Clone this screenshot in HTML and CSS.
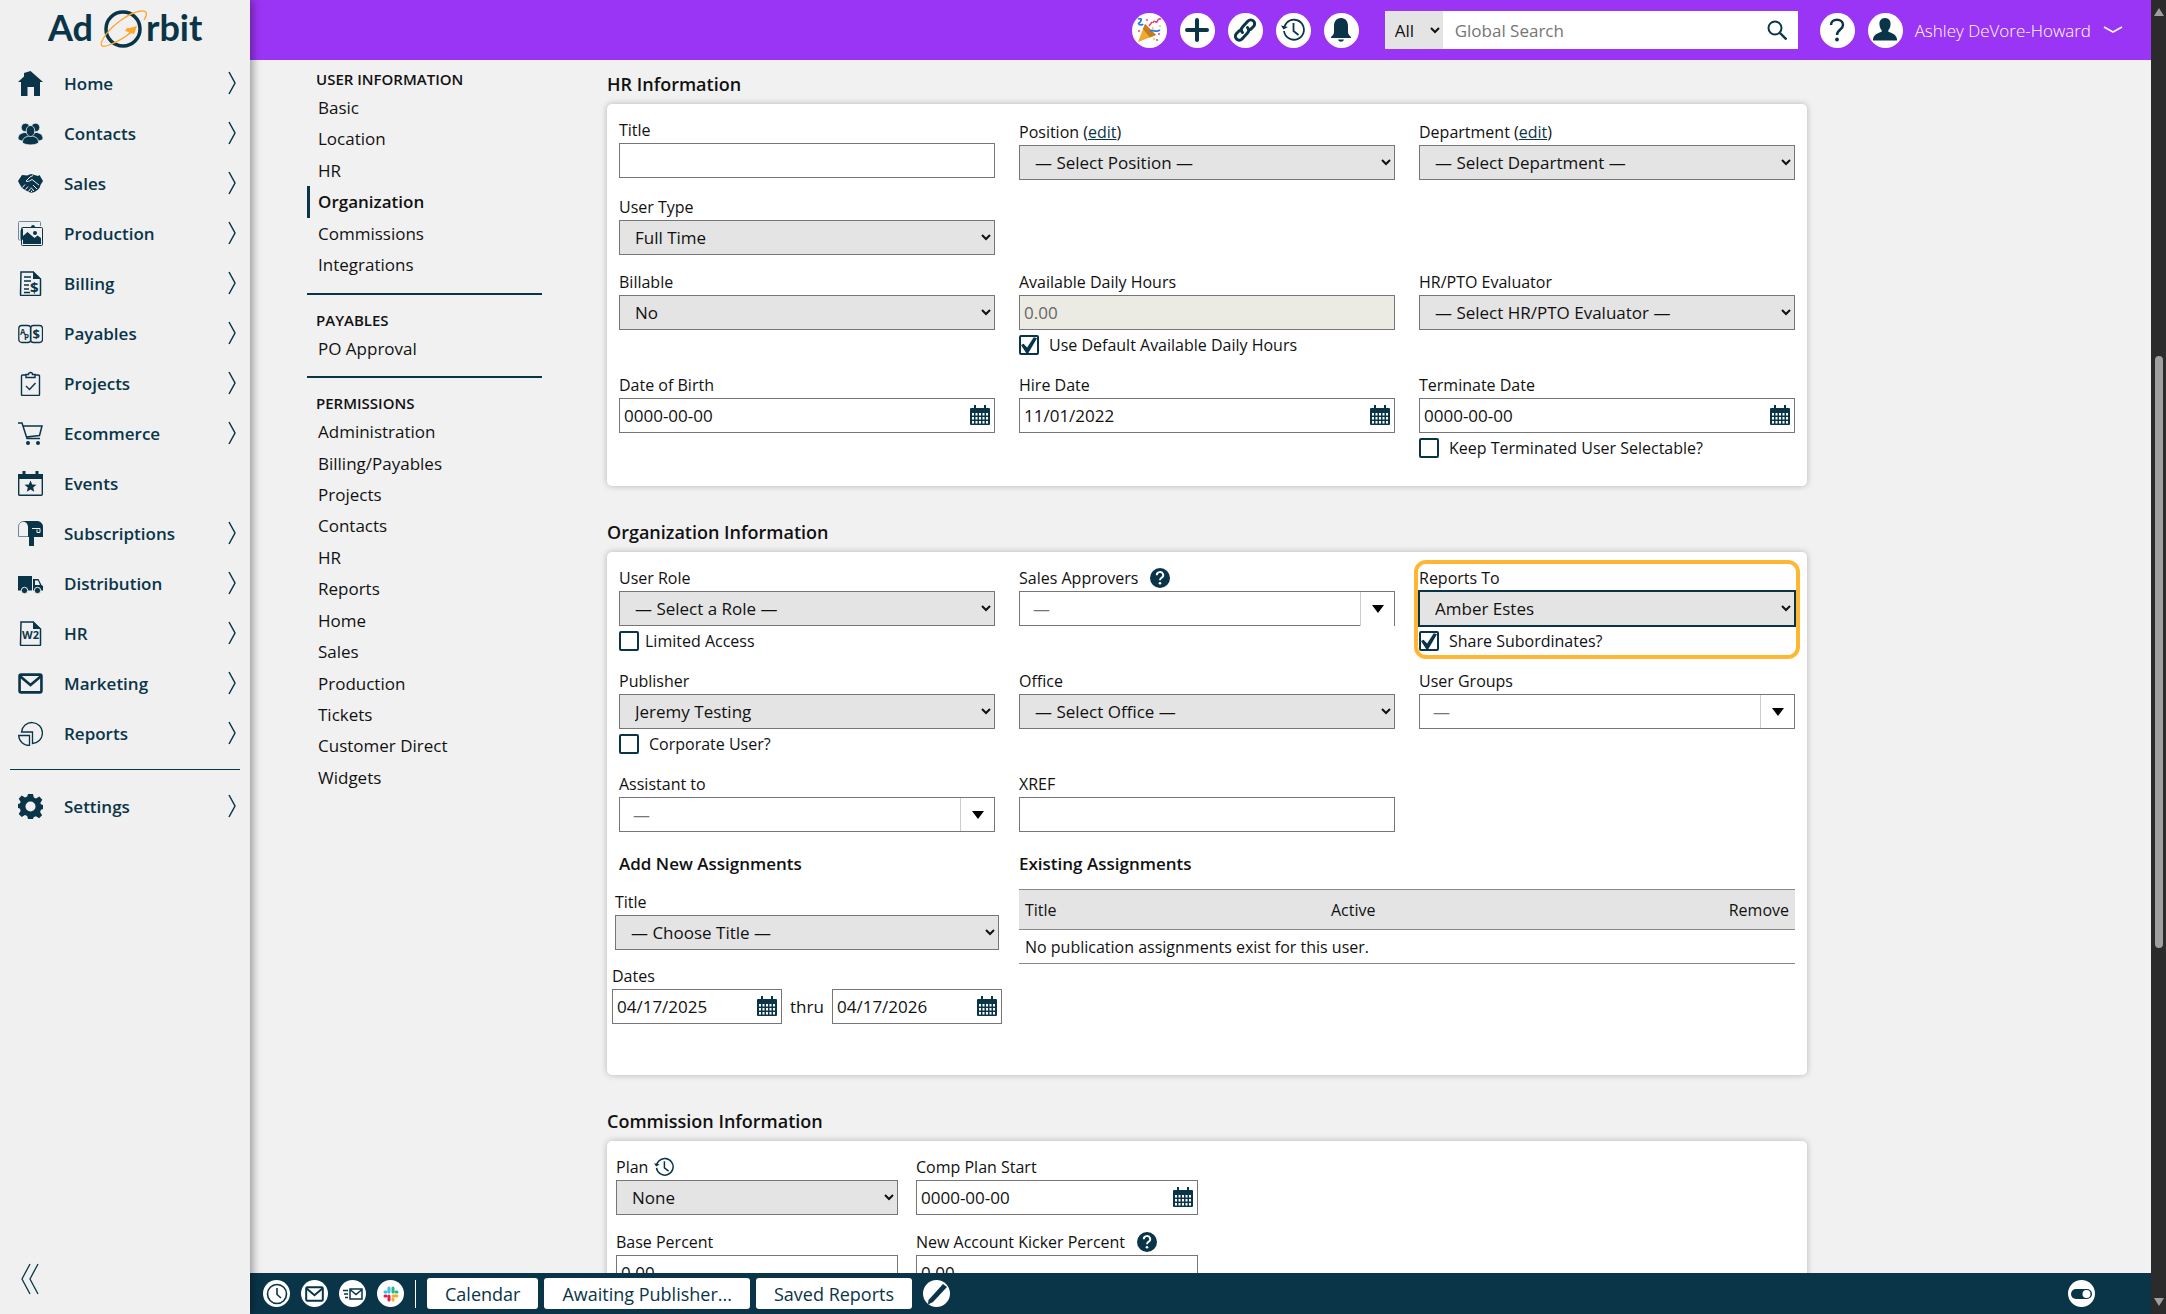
FILE: index.html
```html
<!DOCTYPE html>
<html lang="en">
<head>
    <meta charset="utf-8">
    <title>Ad Orbit - User Information</title>
    <link rel="stylesheet" href="styles.css">
</head>
<body>
    <!-- shared icons -->
    <svg class="sprite" aria-hidden="true">
        <symbol id="chevron" viewBox="0 0 8 24"><path d="M1 1l6 11-6 11" fill="none" stroke="currentColor" stroke-width="1.5"/></symbol>
        <symbol id="calendar" viewBox="0 0 20 20">
            <path d="M1 3h3V0h2v3h8V0h2v3h3a1 1 0 0 1 1 1v15a1 1 0 0 1-1 1H1a1 1 0 0 1-1-1V4a1 1 0 0 1 1-1z" fill="currentColor"/>
            <path d="M2 8h2v2.500H2zm3.500 0h2v2.500h-2zm3.500 0h2v2.500H9zm3.500 0h2v2.500h-2zm3.500 0h2v2.500h-2zM2 12h2v2.500H2zm3.500 0h2v2.500h-2zm3.500 0h2v2.500H9zm3.500 0h2v2.500h-2zm3.500 0h2v2.500h-2zM2 16h2v2.500H2zm3.500 0h2v2.500h-2zm3.500 0h2v2.500H9zm3.500 0h2v2.500h-2zm3.500 0h2v2.500h-2z" fill="#fff"/>
        </symbol>
        <symbol id="history" viewBox="0 0 24 24">
            <path d="M3 13a10 10 0 1 0 2.500-8L3 9" fill="none" stroke="currentColor" stroke-width="1.800"/>
            <path d="M0 7.500l2.500 4L7 9" fill="currentColor"/>
            <path d="M12.500 5v8l5 4" fill="none" stroke="currentColor" stroke-width="1.800"/>
        </symbol>
        <symbol id="help" viewBox="0 0 20 20">
            <circle cx="10" cy="10" r="10" fill="currentColor"/>
            <path d="M6.800 7.300a3.200 3 0 1 1 4.600 2.500c-1 .6-1.400 1.100-1.400 2.500" fill="none" stroke="#fff" stroke-width="1.900"/>
            <circle cx="10" cy="15.200" r="1.300" fill="#fff"/>
        </symbol>
        <symbol id="mail" viewBox="0 0 24 20">
            <rect x="1.500" y="1.500" width="21" height="17" rx="1.500" fill="none" stroke="currentColor" stroke-width="2.500"/>
            <path d="M2 3l10 8.500L22 3" fill="none" stroke="currentColor" stroke-width="2.500"/>
        </symbol>
        <symbol id="down" viewBox="0 0 12 8"><path d="M0 0h12L6 8z" fill="currentColor"/></symbol>
    </svg>

    <aside class="sidebar">
        <a class="logo" href="#" aria-label="Ad Orbit">
            <svg width="160" height="58" viewBox="0 0 160 58">
                <text class="logo-text" x="0" y="41">Ad</text>
                <text class="logo-text" x="98" y="41">rbit</text>
                <circle cx="75" cy="29" r="17" fill="none" stroke="#0a3549" stroke-width="3.500"/>
                <path d="M96 20c4-6 3-10-3-9-11 1-31 15-38 28-4 7-1 9 6 6 8-3 17-8 23-14" fill="none" stroke="#ffa62b" stroke-width="1.300"/>
                <path d="M89 26l-3 8-3-1-2 2 0-3-4-1 2-3 3 0z" fill="#ffa62b"/>
            </svg>
        </a>
        <nav class="nav">
            <a href="#"><svg class="nav-icon" viewBox="0 0 25 25"><path d="M12.500 0L25 11h-3v14h-6v-9H9.500v9H3V11H0L6 5.500V2z" fill="currentColor"/></svg><span>Home</span><svg class="arrow"><use href="#chevron"/></svg></a>
            <a href="#"><svg class="nav-icon" viewBox="0 0 25 25"><g fill="currentColor" stroke="#f0f0f0" stroke-width=".8"><circle cx="7.500" cy="6.500" r="4.300"/><circle cx="17.500" cy="6.500" r="4.300"/><path d="M0 18c0-5 3-5.500 6-6.500h13c3 1 6 1.500 6 6.500-2 2-5 2-5 2H5s-3 0-5-2z"/><path d="M4.500 22c0-5 2-5.500 6-7h4c4 1.500 6 2 6 7-4 2.500-12 2.500-16 0z"/><ellipse cx="12.500" cy="10" rx="4.300" ry="5.500"/></g></svg><span>Contacts</span><svg class="arrow"><use href="#chevron"/></svg></a>
            <a href="#"><svg class="nav-icon" viewBox="0 0 25 25"><path d="M0 10L4 4l5 .5L13 3l7 2 1.500-1L25 10l-2.500 4-1 3-2 2-3 2-3.500 1-5-2.500L4 17l-2.500-4z" fill="currentColor"/><path d="M21 14l-7-5.500c-3 2-5 2.500-6 1.500l4-4 3-1.500M4.500 16.500l2.500-3M7.500 18.500l2.500-3M10.500 20.500l2-3M13 21.500l1-2M15 14l4 4M13 16.500l3 3.500" fill="none" stroke="#f0f0f0"/></svg><span>Sales</span><svg class="arrow"><use href="#chevron"/></svg></a>
            <a href="#"><svg class="nav-icon" viewBox="0 0 25 25"><path d="M3 19H1.500a1 1 0 0 1-1-1V1.500a1 1 0 0 1 1-1h20a1 1 0 0 1 1 1V5" fill="none" stroke="#6f8996"/><rect x="3.500" y="6.500" width="21" height="18" rx="1" fill="#f0f0f0" stroke="currentColor"/><path d="M5 15l4.500-4 7 6 3-2.500L23 17v6H5z" fill="currentColor"/><circle cx="17" cy="12" r="2" fill="currentColor"/><path d="M2.500 18V9.500L5 7v12zM13 6a2 2 0 0 1 4 0z" fill="currentColor"/></svg><span>Production</span><svg class="arrow"><use href="#chevron"/></svg></a>
            <a href="#"><svg class="nav-icon" viewBox="0 0 25 25"><path d="M3 1h12l7.500 7v15.500a1 1 0 0 1-1 1h-18a1 1 0 0 1-1-1z" fill="none" stroke="currentColor" stroke-width="1.500"/><path d="M15 0v8h8z" fill="currentColor"/><path d="M6 6h7M6 10h7M6 14h5M6 18h5M6 21.500h6" stroke="currentColor" stroke-width="1.300"/><text class="icon-text" x="12" y="22" font-size="15">$</text></svg><span>Billing</span><svg class="arrow"><use href="#chevron"/></svg></a>
            <a href="#"><svg class="nav-icon" viewBox="0 0 25 25"><rect x=".8" y="4.500" width="12" height="17" rx="3" fill="none" stroke="currentColor" stroke-width="1.300"/><rect x="12.500" y="4.500" width="12" height="17" rx="3" fill="none" stroke="currentColor" stroke-width="1.300"/><text class="icon-text" x="2" y="14" font-size="8">A</text><text class="icon-text" x="6" y="19" font-size="8">P</text><text class="icon-text" x="14.500" y="18" font-size="13">$</text></svg><span>Payables</span><svg class="arrow"><use href="#chevron"/></svg></a>
            <a href="#"><svg class="nav-icon" viewBox="0 0 25 25"><path d="M8 4H4.500a1 1 0 0 0-1 1v18.500a1 1 0 0 0 1 1h16a1 1 0 0 0 1-1V5a1 1 0 0 0-1-1H17M8 6.500V3.500h2.500a2 2 0 0 1 4 0H17v3z" fill="none" stroke="currentColor" stroke-width="1.400"/><path d="M8 15l3.500 3.500L17.500 12" fill="none" stroke="currentColor" stroke-width="1.400"/></svg><span>Projects</span><svg class="arrow"><use href="#chevron"/></svg></a>
            <a href="#"><svg class="nav-icon" viewBox="0 0 25 25"><path d="M0 2h4l5 15.500h13M5 5h19l-2.500 9.500L8 16" fill="none" stroke="currentColor" stroke-width="1.500"/><circle cx="10" cy="22" r="2" fill="currentColor"/><circle cx="20" cy="22" r="2" fill="currentColor"/></svg><span>Ecommerce</span><svg class="arrow"><use href="#chevron"/></svg></a>
            <a href="#"><svg class="nav-icon" viewBox="0 0 25 25"><rect x=".7" y="4" width="23.600" height="20.300" rx="1" fill="none" stroke="currentColor" stroke-width="1.400"/><path d="M0 3h4.500V0h3v3h10V0h3v3H25v5H0z" fill="currentColor"/><path d="M12.500 9.500l1.700 4 4.300.3-3.300 2.800 1 4.200-3.700-2.300-3.700 2.300 1-4.200-3.300-2.800 4.300-.3z" fill="currentColor"/></svg><span>Events</span></a>
            <a href="#"><svg class="nav-icon" viewBox="0 0 25 25"><path d="M5 .5h14a5.500 5.500 0 0 1 5.500 5.500v9.500H.5V6A5 5 0 0 1 5 .5z" fill="none" stroke="#6f8996"/><path d="M5 0h14a6 6 0 0 1 6 6v10h-9v9h-5V16h-1V6c0-3-2-5-5-6z" fill="currentColor"/><path d="M14 7.500h8v4h-3v-3" fill="none" stroke="#f0f0f0"/></svg><span>Subscriptions</span><svg class="arrow"><use href="#chevron"/></svg></a>
            <a href="#"><svg class="nav-icon" viewBox="0 0 25 25"><path d="M0 5h14v14.500H0zM15 8h5.500l3 6L25 15v4.500H15z" fill="currentColor"/><path d="M17 9.500h3l2 4.500h-5z" fill="#f0f0f0"/><g fill="currentColor" stroke="#f0f0f0"><circle cx="6.500" cy="19.500" r="3.200"/><circle cx="19.500" cy="19.500" r="3.200"/></g></svg><span>Distribution</span><svg class="arrow"><use href="#chevron"/></svg></a>
            <a href="#"><svg class="nav-icon" viewBox="0 0 25 25"><path d="M3 1h12l7.500 7v15.500a1 1 0 0 1-1 1h-18a1 1 0 0 1-1-1z" fill="none" stroke="currentColor" stroke-width="1.500"/><path d="M15 0v8h8z" fill="currentColor"/><text class="icon-text" x="4" y="18" font-size="11">W2</text></svg><span>HR</span><svg class="arrow"><use href="#chevron"/></svg></a>
            <a href="#"><svg class="nav-icon"><use href="#mail"/></svg><span>Marketing</span><svg class="arrow"><use href="#chevron"/></svg></a>
            <a href="#"><svg class="nav-icon" viewBox="0 0 25 25"><path d="M3.500 11A10.500 10.500 0 1 1 14.500 22.500V11z" fill="none" stroke="currentColor" stroke-width="1.300"/><path d="M.7 14.500h10.800v10A10.500 10.500 0 0 1 .7 14.500z" fill="none" stroke="currentColor" stroke-width="1.300"/></svg><span>Reports</span><svg class="arrow"><use href="#chevron"/></svg></a>
            <hr>
            <a href="#"><svg class="nav-icon" viewBox="0 0 25 25"><path d="M10 0h5l.8 3.600 2.200 1 3.300-2 3 3.200-2 3.200.9 1.600 1.800.4v4l-2 .8-.9 2.200 2 3.200-3 3-3.200-2-2.300 1L15 25h-5l-.8-3-2.300-1-3.200 2-3-3 2-3.200-.9-2.200L0 14v-4l1.800-.4.9-1.600-2-3.200 3-3.200 3.300 2 2.200-1z" fill="currentColor"/><circle cx="12.500" cy="12.500" r="5" fill="#f0f0f0"/></svg><span>Settings</span><svg class="arrow"><use href="#chevron"/></svg></a>
        </nav>
        <button class="collapse" type="button" aria-label="Collapse menu"><svg width="18" height="32" viewBox="0 0 18 32"><path d="M9 1L1 16l8 15M17 1L9 16l8 15" fill="none" stroke="#0a3549" stroke-width="1.300"/></svg></button>
    </aside>

    <div class="page">
        <header class="topbar">
            <button class="round" type="button" aria-label="What's new"><svg width="25" height="25" viewBox="0 0 25 25"><path d="M8 6l11 11L1 24z" fill="#f0a830"/><path d="M8 6l11 11-6 2.500L6 11z" fill="#c97b1c"/><path d="M1 1c5-2 3 3 1 4s3 3 4 1M13 13c4-2 5 2 10-1" fill="none" stroke="#2c7be5" stroke-width="1.800"/><path d="M16 5c1-4 3 0 4-1s0-4 4-3M12 8l3-4" fill="none" stroke="#e3457d" stroke-width="1.600"/><g fill="#e3457d"><circle cx="2" cy="13" r="1"/><circle cx="10" cy="2" r="1"/><circle cx="22" cy="16" r="1"/><circle cx="20" cy="22" r="1"/></g><g fill="#f6c443"><circle cx="16" cy="10" r="1"/><circle cx="23" cy="8" r="1"/><circle cx="17" cy="21" r="1"/></g></svg></button>
            <button class="round" type="button" aria-label="Add"><svg width="24" height="24" viewBox="0 0 24 24"><path d="M12 2v20M2 12h20" stroke="currentColor" stroke-width="4" stroke-linecap="round"/></svg></button>
            <button class="round" type="button" aria-label="Links"><svg width="24" height="24" viewBox="0 0 24 24"><g fill="none" stroke="currentColor" stroke-width="3" stroke-linecap="round"><path d="M14.500 9.500c2 2 1.500 4 0 5.500l-5.500 6c-1.500 1.500-4 1.500-5.500 0s-1.500-4 0-5.500L6.500 12.500"/><path d="M9.500 14.500c-2-2-1.500-4 0-5.500L15 3c1.500-1.500 4-1.500 5.500 0s1.500 4 0 5.500l-3 3"/></g></svg></button>
            <button class="round" type="button" aria-label="History"><svg width="24" height="24"><use href="#history"/></svg></button>
            <button class="round" type="button" aria-label="Notifications"><svg width="22" height="24" viewBox="0 0 22 24"><path d="M11 0c5 0 7 4 7 8v6c0 2 1 3 3 5v1H1v-1c2-2 3-3 3-5V8c0-4 2-8 7-8zM8 21.500h6c-1 3-5 3-6 0z" fill="currentColor"/></svg></button>
            <form class="search">
                <select class="search-scope" aria-label="Search in"><option>All</option></select>
                <input class="search-input" type="text" placeholder="Global Search" aria-label="Global Search">
                <button class="search-button" type="button" aria-label="Search"><svg width="20" height="20" viewBox="0 0 20 20"><circle cx="8" cy="8" r="6.500" fill="none" stroke="currentColor" stroke-width="2"/><path d="M13 13l6.500 6.500" stroke="currentColor" stroke-width="2.400"/></svg></button>
            </form>
            <button class="round" type="button" aria-label="Help"><svg width="16" height="24" viewBox="0 0 16 24"><path d="M2 7c0-7 12-7 12 0 0 4.500-6 4.500-6 10" fill="none" stroke="currentColor" stroke-width="2.500"/><circle cx="8" cy="21.500" r="1.900" fill="currentColor"/></svg></button>
            <a class="user" href="#">
                <span class="round"><svg width="24" height="24" viewBox="0 0 24 24"><path d="M12 0c4 0 6 3 5.500 7-.3 3-1.500 4.500-2.500 6 1 2 8 2 9 8v1.500H0V21c1-6 8-6 9-8-1-1.500-2.200-3-2.500-6C6 3 8 0 12 0z" fill="currentColor"/></svg></span>
                <span>Ashley DeVore-Howard</span>
                <svg width="20" height="8" viewBox="0 0 20 8"><path d="M1 1l9 5 9-5" fill="none" stroke="#fff" stroke-width="1.600"/></svg>
            </a>
        </header>

        <div class="content">
            <nav class="subnav">
                <h4>User Information</h4>
                <a href="#">Basic</a>
                <a href="#">Location</a>
                <a href="#">HR</a>
                <a href="#" class="active">Organization</a>
                <a href="#">Commissions</a>
                <a href="#">Integrations</a>
                <hr>
                <h4>Payables</h4>
                <a href="#">PO Approval</a>
                <hr>
                <h4>Permissions</h4>
                <a href="#">Administration</a>
                <a href="#">Billing/Payables</a>
                <a href="#">Projects</a>
                <a href="#">Contacts</a>
                <a href="#">HR</a>
                <a href="#">Reports</a>
                <a href="#">Home</a>
                <a href="#">Sales</a>
                <a href="#">Production</a>
                <a href="#">Tickets</a>
                <a href="#">Customer Direct</a>
                <a href="#">Widgets</a>
            </nav>

            <main class="forms">
                <h2>HR Information</h2>
                <section class="card">
                    <div class="fields">
                        <div class="field">
                            <label for="title">Title</label>
                            <input class="text" type="text" id="title">
                        </div>
                        <div class="field">
                            <div class="label-edit"><label for="position">Position</label> (<a href="#">edit</a>)</div>
                            <select id="position"><option>— Select Position —</option></select>
                        </div>
                        <div class="field">
                            <div class="label-edit"><label for="department">Department</label> (<a href="#">edit</a>)</div>
                            <select id="department"><option>— Select Department —</option></select>
                        </div>
                        <div class="field">
                            <label for="user-type">User Type</label>
                            <select id="user-type"><option>Full Time</option></select>
                        </div>
                        <div class="field first">
                            <label for="billable">Billable</label>
                            <select id="billable"><option>No</option></select>
                        </div>
                        <div class="field">
                            <label for="hours">Available Daily Hours</label>
                            <input class="text" type="text" id="hours" value="0.00" disabled>
                            <div class="check"><input type="checkbox" id="default-hours" checked><label for="default-hours">Use Default Available Daily Hours</label></div>
                        </div>
                        <div class="field">
                            <label for="evaluator">HR/PTO Evaluator</label>
                            <select id="evaluator"><option>— Select HR/PTO Evaluator —</option></select>
                        </div>
                        <div class="field">
                            <label for="birth">Date of Birth</label>
                            <div class="date"><input type="text" id="birth" value="0000-00-00"><button type="button" aria-label="Pick date"><svg><use href="#calendar"/></svg></button></div>
                        </div>
                        <div class="field">
                            <label for="hire">Hire Date</label>
                            <div class="date"><input type="text" id="hire" value="11/01/2022"><button type="button" aria-label="Pick date"><svg><use href="#calendar"/></svg></button></div>
                        </div>
                        <div class="field">
                            <label for="terminate">Terminate Date</label>
                            <div class="date"><input type="text" id="terminate" value="0000-00-00"><button type="button" aria-label="Pick date"><svg><use href="#calendar"/></svg></button></div>
                            <div class="check"><input type="checkbox" id="keep"><label for="keep">Keep Terminated User Selectable?</label></div>
                        </div>
                    </div>
                </section>

                <h2>Organization Information</h2>
                <section class="card card-org">
                    <div class="fields">
                        <div class="field">
                            <label for="role">User Role</label>
                            <select id="role"><option>— Select a Role —</option></select>
                            <div class="check check-tight"><input type="checkbox" id="limited"><label for="limited">Limited Access</label></div>
                        </div>
                        <div class="field">
                            <div class="label-icon"><label for="approvers">Sales Approvers</label><svg width="20" height="20"><use href="#help"/></svg></div>
                            <div class="combo combo-cut"><input type="text" id="approvers" placeholder="—"><button type="button" aria-label="Show approvers"><svg><use href="#down"/></svg></button></div>
                        </div>
                        <div class="field highlight">
                            <label for="reports-to">Reports To</label>
                            <select id="reports-to" class="focused"><option>Amber Estes</option></select>
                            <div class="check"><input type="checkbox" id="share" checked><label for="share">Share Subordinates?</label></div>
                        </div>
                        <div class="field">
                            <label for="publisher">Publisher</label>
                            <select id="publisher"><option>Jeremy Testing</option></select>
                            <div class="check"><input type="checkbox" id="corporate"><label for="corporate">Corporate User?</label></div>
                        </div>
                        <div class="field">
                            <label for="office">Office</label>
                            <select id="office"><option>— Select Office —</option></select>
                        </div>
                        <div class="field">
                            <label for="groups">User Groups</label>
                            <div class="combo"><input type="text" id="groups" placeholder="—"><button type="button" aria-label="Show groups"><svg><use href="#down"/></svg></button></div>
                        </div>
                        <div class="field">
                            <label for="assistant">Assistant to</label>
                            <div class="combo"><input type="text" id="assistant" placeholder="—"><button type="button" aria-label="Show users"><svg><use href="#down"/></svg></button></div>
                        </div>
                        <div class="field">
                            <label for="xref">XREF</label>
                            <input class="text" type="text" id="xref">
                        </div>
                    </div>

                    <div class="assignments">
                        <div class="add">
                            <h3>Add New Assignments</h3>
                            <div class="field add-title">
                                <label for="new-title">Title</label>
                                <select id="new-title"><option>— Choose Title —</option></select>
                            </div>
                            <div class="field add-dates">
                                <label for="date-from">Dates</label>
                                <div class="range">
                                    <div class="date"><input type="text" id="date-from" value="04/17/2025"><button type="button" aria-label="Pick date"><svg><use href="#calendar"/></svg></button></div>
                                    <label for="date-to" class="thru">thru</label>
                                    <div class="date"><input type="text" id="date-to" value="04/17/2026"><button type="button" aria-label="Pick date"><svg><use href="#calendar"/></svg></button></div>
                                </div>
                            </div>
                        </div>
                        <div class="existing">
                            <h3>Existing Assignments</h3>
                            <table>
                                <thead>
                                    <tr><th>Title</th><th>Active</th><th>Remove</th></tr>
                                </thead>
                                <tbody>
                                    <tr><td colspan="3">No publication assignments exist for this user.</td></tr>
                                </tbody>
                            </table>
                        </div>
                    </div>
                </section>

                <h2>Commission Information</h2>
                <section class="card card-commission">
                    <div class="fields fields-4">
                        <div class="field">
                            <div class="label-icon label-plan"><label for="plan">Plan</label><svg width="20" height="20"><use href="#history"/></svg></div>
                            <select id="plan"><option>None</option></select>
                        </div>
                        <div class="field">
                            <label for="comp">Comp Plan Start</label>
                            <div class="date"><input type="text" id="comp" value="0000-00-00"><button type="button" aria-label="Pick date"><svg><use href="#calendar"/></svg></button></div>
                        </div>
                        <div class="field first">
                            <label for="base">Base Percent</label>
                            <input class="text" type="text" id="base" value="0.00">
                        </div>
                        <div class="field">
                            <div class="label-icon"><label for="kicker">New Account Kicker Percent</label><svg width="20" height="20"><use href="#help"/></svg></div>
                            <input class="text" type="text" id="kicker" value="0.00">
                        </div>
                    </div>
                </section>
            </main>
        </div>

        <footer class="bottombar">
            <button class="round small" type="button" aria-label="Clock"><svg width="22" height="22" viewBox="0 0 22 22"><circle cx="11" cy="11" r="9.500" fill="none" stroke="currentColor" stroke-width="1.600"/><path d="M11 5v6.500l4 3.500" fill="none" stroke="currentColor" stroke-width="1.600"/></svg></button>
            <button class="round small" type="button" aria-label="Mail"><svg width="19" height="16"><use href="#mail"/></svg></button>
            <button class="round small" type="button" aria-label="Send mail"><svg width="20" height="12" viewBox="0 0 20 12"><path d="M7 1h12v10H7zM7 1.500l6 5 6-5M0 2.500h5M1 6h4M2 9.500h3" fill="none" stroke="currentColor" stroke-width="1.500"/></svg></button>
            <button class="round small" type="button" aria-label="Slack"><svg width="16" height="16" viewBox="0 0 16 16"><g fill="none" stroke-width="3" stroke-linecap="round"><path d="M6 2v4M2 6h1" stroke="#36c5f0"/><path d="M10 2v4M14 6h-1" stroke="#2eb67d"/><path d="M10 10h4M10 13v1" stroke="#ecb22e"/><path d="M6 10v4M2 10h1" stroke="#e01e5a"/></g></svg></button>
            <span class="divider"></span>
            <div class="tabs">
                <button class="tab" type="button">Calendar</button>
                <button class="tab" type="button">Awaiting Publisher...</button>
                <button class="tab" type="button">Saved Reports</button>
            </div>
            <button class="round small" type="button" aria-label="Edit"><svg width="20" height="22" viewBox="0 0 20 22"><path d="M16 1l4 3L6 19l-5 2.500L1.500 17z" fill="currentColor"/></svg></button>
            <button class="round small toggle" type="button" aria-label="Toggle bar"><svg width="21" height="10" viewBox="0 0 21 10"><rect width="21" height="10" rx="5" fill="currentColor"/><circle cx="15.500" cy="5" r="4" fill="#fff"/></svg></button>
        </footer>
    </div>

    <div class="scrollbar" aria-hidden="true">
        <svg width="10" height="8" viewBox="0 0 10 8"><path d="M5 0l5 8H0z" fill="#9f9f9f"/></svg>
        <div class="track-before"></div>
        <div class="thumb"></div>
        <div class="track-after"></div>
        <svg width="10" height="8" viewBox="0 0 10 8"><path d="M0 0h10L5 8z" fill="#9f9f9f"/></svg>
    </div>
</body>
</html>
```
FILE: styles.css
```css
* {
    box-sizing: border-box;
}
body {
    display: flex;
    height: 100vh;
    margin: 0;
    overflow: hidden;
    background-color: #f1f1f1;
    color: #111;
    font-family: "Open Sans", sans-serif;
    font-size: 16px;
}
a {
    color: #0a3549;
}
button, input, select {
    font-family: inherit;
    font-size: 17px;
    color: inherit;
    margin: 0;
}
button {
    padding: 0;
    border: none;
    background: none;
    color: #0a3549;
    cursor: pointer;
}
.sprite {
    display: none;
}

/* left menu */
.sidebar {
    display: flex;
    flex-direction: column;
    flex: 0 0 250px;
    background-color: #f0f0f0;
    box-shadow: 3px 0 8px rgba(0, 0, 0, 0.35);
    z-index: 2;
}
.logo {
    height: 58px;
    padding-left: 48px;
}
.logo-text {
    font-family: Lato, sans-serif;
    font-size: 36px;
    font-weight: 700;
    fill: #0a3549;
}
.nav a {
    display: flex;
    align-items: center;
    height: 50px;
    padding: 0 14px 0 18px;
    font-size: 17px;
    font-weight: 600;
    text-decoration: none;
}
.nav span {
    flex: 1;
    margin-left: 21px;
}
.nav hr {
    margin: 11px 10px;
    border: none;
    border-top: 1px solid #0a3549;
}
.nav-icon {
    width: 25px;
    height: 25px;
}
.icon-text {
    font-weight: 700;
    fill: #0a3549;
}
.arrow {
    width: 8px;
    height: 24px;
}
.collapse {
    align-self: flex-start;
    margin: auto 0 14px 21px;
}

/* top bar */
.page {
    display: flex;
    flex-direction: column;
    flex: 1;
    min-width: 0;
}
.topbar {
    display: flex;
    align-items: center;
    justify-content: flex-end;
    gap: 13px;
    flex: 0 0 60px;
    padding-right: 28px;
    background-color: #9b35f5;
}
.round {
    display: flex;
    align-items: center;
    justify-content: center;
    flex: none;
    width: 35px;
    height: 35px;
    border-radius: 50%;
    background-color: #fff;
    color: #0a3549;
}
.search {
    display: flex;
    width: 413px;
    height: 38px;
    margin: 0 9px 0 13px;
    background-color: #fff;
}
.search-input {
    flex: 1;
    min-width: 0;
    padding: 0 12px;
    border: none;
}
.search-button {
    width: 42px;
}
.search-button svg {
    display: block;
    margin: auto;
}
.user {
    display: flex;
    align-items: center;
    gap: 12px;
    color: #fff;
    font-size: 17px;
    font-weight: 300;
    text-decoration: none;
}

/* section links */
.content {
    display: flex;
    gap: 65px;
    flex: 1;
    min-height: 0;
    padding-left: 57px;
    overflow: hidden;
}
.subnav {
    flex: 0 0 235px;
    padding-top: 7px;
}
.subnav h4 {
    margin: 0;
    padding-left: 9px;
    font-size: 15px;
    font-weight: 600;
    line-height: 25px;
    text-transform: uppercase;
}
.subnav a {
    display: block;
    padding-left: 8px;
    border-left: 3px solid transparent;
    color: #111;
    font-size: 17px;
    line-height: 1.85;
    text-decoration: none;
}
.subnav .active {
    border-left-color: #0a3549;
    font-weight: 600;
}
.subnav hr {
    margin: 12px 0 13px;
    border: none;
    border-top: 2px solid #0a3549;
}

/* forms */
.forms {
    flex: 1;
    max-width: 1200px;
    padding-top: 12px;
}
h2 {
    margin: 0 0 8px;
    font-size: 18px;
    font-weight: 600;
    line-height: 24px;
}
h3 {
    margin: 0;
    font-size: 17px;
    font-weight: 600;
    line-height: 24px;
}
.card {
    margin-bottom: 34px;
    padding: 16px 12px 25px;
    border-radius: 5px;
    background-color: #fff;
    box-shadow: 0 0 6px rgba(0, 0, 0, 0.25);
}
.card-org {
    padding-bottom: 51px;
}
.card-commission {
    padding-left: 9px;
    padding-right: 9px;
}
.fields {
    display: grid;
    grid-template-columns: repeat(3, 1fr);
    gap: 17px 24px;
}
.fields-4 {
    grid-template-columns: repeat(4, 1fr);
    column-gap: 18px;
}
.first {
    grid-column: 1;
}
.field {
    min-width: 0;
}
.field label, .label-edit {
    display: block;
    padding-bottom: 3px;
    line-height: 20px;
}
.label-edit {
    padding-top: 2px;
}
.label-edit label {
    display: inline;
    padding: 0;
}
.label-icon {
    display: flex;
    align-items: flex-start;
    gap: 12px;
    color: #0a3549;
}
.label-icon label {
    color: #111;
}
.label-plan {
    gap: 6px;
}
.text, select {
    display: block;
    width: 100%;
    height: 35px;
    border: 1px solid #767676;
    border-radius: 0;
    background-color: #fff;
}
.text {
    padding: 0 4px;
}
.text:disabled {
    background-color: #ebebe3;
    color: #666;
}
select {
    padding: 0 0 0 11px;
    background-color: #e4e4e4;
}
.search-scope {
    width: 58px;
    height: 38px;
    padding-left: 6px;
    border: none;
}
.focused {
    outline: 2px solid #0a3549;
    outline-offset: -1px;
}
.date, .combo {
    display: flex;
    min-width: 0;
    height: 35px;
    border: 1px solid #767676;
    background-color: #fff;
}
.date input, .combo input {
    flex: 1;
    min-width: 0;
    padding: 0 4px;
    border: none;
    background: none;
}
.date button {
    width: 28px;
}
.date svg {
    display: block;
    width: 20px;
    height: 20px;
    margin: -2px auto 0;
}
.combo input {
    padding: 0 13px;
}
.combo button {
    width: 34px;
    border-left: 1px solid #ccc;
    background-color: #fff;
    color: #000;
}
.combo svg {
    display: block;
    width: 12px;
    height: 8px;
    margin: auto;
}
/* the arrow button covers the bottom border here */
.combo-cut button {
    margin-bottom: -1px;
}
.check {
    display: flex;
    align-items: center;
    gap: 10px;
    padding: 5px 0 3px;
}
.check-tight {
    gap: 6px;
}
.check label {
    padding: 0;
}
.check input {
    appearance: none;
    width: 20px;
    height: 20px;
    border: 2px solid #0a3549;
    border-radius: 2px;
    background-color: #fff;
}
.check input:checked::before {
    content: "";
    display: block;
    width: 16px;
    height: 16px;
    background-color: #0a3549;
    clip-path: polygon(0 50%, 16% 42%, 38% 66%, 80% 2%, 100% 8%, 46% 100%, 32% 100%);
}
.highlight {
    position: relative;
}
.highlight::after {
    content: "";
    position: absolute;
    inset: -8px -5px -5px;
    border: 4px solid #ffb733;
    border-radius: 12px;
    pointer-events: none;
}

/* assignments */
.assignments {
    display: grid;
    /* keeps the split on the three column grid above */
    grid-template-columns: calc((100% - 48px) / 3) 1fr;
    gap: 24px;
    margin-top: 20px;
}
.add-title {
    margin: 16px -4px;
}
.add-dates {
    margin: 0 -7px;
}
.range {
    display: flex;
}
.range .date {
    flex: 1;
}
.range input {
    width: 0;
}
.field .thru {
    flex: 0 0 50px;
    padding: 0;
    font-size: 17px;
    line-height: 35px;
    text-align: center;
}
table {
    width: 100%;
    margin-top: 13px;
    border-collapse: collapse;
    table-layout: fixed;
}
th, td {
    padding: 0 6px;
    border-top: 1px solid #888;
    border-bottom: 1px solid #888;
    text-align: left;
    font-weight: 400;
}
th {
    height: 40px;
    background-color: #e4e4e4;
}
th:first-child {
    width: 306px;
}
th:last-child {
    text-align: right;
}
td {
    height: 34px;
}

/* bottom bar */
.bottombar {
    display: flex;
    align-items: center;
    gap: 11px;
    flex: 0 0 41px;
    padding: 0 56px 0 13px;
    background-color: #0a3549;
}
.small {
    width: 27px;
    height: 27px;
}
.divider {
    width: 1px;
    height: 28px;
    background-color: #fff;
}
.tabs {
    display: flex;
    gap: 6px;
}
.tab {
    height: 31px;
    padding: 0 18px;
    border-radius: 3px;
    background-color: #fff;
    font-size: 18px;
    white-space: nowrap;
}
.toggle {
    margin-left: auto;
}

/* page scrollbar */
.scrollbar {
    display: flex;
    flex-direction: column;
    align-items: center;
    flex: 0 0 15px;
    padding: 8px 0;
    background-color: #2b2b2b;
}
.track-before {
    flex: 340;
}
.thumb {
    flex: 591;
    width: 8px;
    border-radius: 4px;
    background-color: #9f9f9f;
}
.track-after {
    flex: 350;
}
```
